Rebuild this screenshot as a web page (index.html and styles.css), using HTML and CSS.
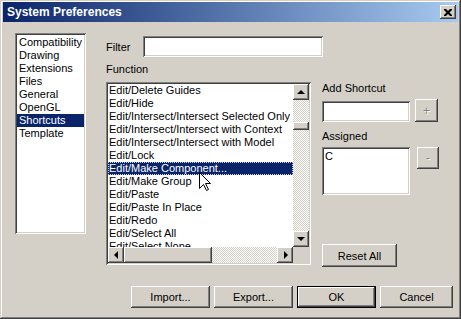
FILE: index.html
```html
<!DOCTYPE html>
<html lang="en">
<head>
    <meta charset="UTF-8">
    <title>System Preferences</title>
    <link rel="stylesheet" href="styles.css">
</head>
<body>
    <div class="window">
        <div class="titlebar">
            <span class="title">System Preferences</span>
            <div class="close-btn">
                <svg width="8" height="7" viewBox="0 0 8 7"><path d="M0 0h2l2 2 2-2h2v1l-2.5 2.5 2.5 2.5v1h-2l-2-2-2 2h-2v-1l2.5-2.5-2.5-2.5z" fill="#000"/></svg>
            </div>
        </div>
        <div class="client">
            <div class="main">
                <div class="nav sunken">
                    <div class="nav-item">Compatibility</div>
                    <div class="nav-item">Drawing</div>
                    <div class="nav-item">Extensions</div>
                    <div class="nav-item">Files</div>
                    <div class="nav-item">General</div>
                    <div class="nav-item">OpenGL</div>
                    <div class="nav-item selected">Shortcuts</div>
                    <div class="nav-item">Template</div>
                </div>
                <div class="content">
                    <div class="filter-row">
                        <span class="filter-label">Filter</span>
                        <div class="field filter-field sunken"></div>
                    </div>
                    <div class="lower">
                        <div class="function-col">
                            <div class="label">Function</div>
                            <div class="function-list sunken">
                                <div class="items">
                                    <div class="item">Edit/Delete Guides</div>
                                    <div class="item">Edit/Hide</div>
                                    <div class="item">Edit/Intersect/Intersect Selected Only</div>
                                    <div class="item">Edit/Intersect/Intersect with Context</div>
                                    <div class="item">Edit/Intersect/Intersect with Model</div>
                                    <div class="item">Edit/Lock</div>
                                    <div class="item selected">Edit/Make Component...</div>
                                    <div class="item">Edit/Make Group</div>
                                    <div class="item">Edit/Paste</div>
                                    <div class="item">Edit/Paste In Place</div>
                                    <div class="item">Edit/Redo</div>
                                    <div class="item">Edit/Select All</div>
                                    <div class="item">Edit/Select None</div>
                                </div>
                                <div class="vscroll">
                                    <div class="scroll-btn raised"><span class="arrow up"></span></div>
                                    <div class="track vtrack"><div class="thumb vthumb raised"></div></div>
                                    <div class="scroll-btn raised"><span class="arrow down"></span></div>
                                </div>
                                <div class="hscroll">
                                    <div class="scroll-btn raised"><span class="arrow left"></span></div>
                                    <div class="track htrack"><div class="thumb hthumb raised"></div></div>
                                    <div class="scroll-btn raised"><span class="arrow right"></span></div>
                                </div>
                                <div class="corner"></div>
                            </div>
                        </div>
                        <div class="side">
                            <div class="label">Add Shortcut</div>
                            <div class="add-row">
                                <div class="field shortcut-field sunken"></div>
                                <div class="btn small-btn plus-btn raised">+</div>
                            </div>
                            <div class="label assigned-label">Assigned</div>
                            <div class="assigned-row">
                                <div class="assigned-list sunken">C</div>
                                <div class="btn small-btn minus-btn raised">-</div>
                            </div>
                            <div class="btn reset-btn raised">Reset All</div>
                        </div>
                    </div>
                </div>
            </div>
            <div class="button-row">
                <div class="btn dlg-btn raised">Import...</div>
                <div class="btn dlg-btn raised">Export...</div>
                <div class="btn dlg-btn default-btn">OK</div>
                <div class="btn dlg-btn cancel-btn raised">Cancel</div>
            </div>
        </div>
        <svg class="cursor" width="12" height="19" viewBox="0 0 12 19"><path d="M0.5 0.5V16.5L4.5 12.5L7.5 18.5L9.5 17.5L6.5 11.5H11.5Z" fill="#fff" stroke="#000" stroke-width="1"/></svg>
    </div>
</body>
</html>
```

FILE: styles.css
```css
body { margin: 0; font-family: "Liberation Sans", Arial, sans-serif; font-size: 11px; color: #000; background: #d4d0c8; }
.window { position: relative; width: 461px; height: 319px; box-sizing: border-box; padding: 2px 3px 3px; background: #d4d0c8; display: flex; flex-direction: column; box-shadow: inset -1px -1px #404040, inset 1px 1px #d4d0c8, inset -2px -2px #808080, inset 2px 2px #fff; }
.titlebar { height: 20px; flex: none; display: flex; align-items: center; justify-content: space-between; padding: 0 2px 0 4px; background: linear-gradient(to right, #0a246a, #a6caf0); color: #fff; font-weight: bold; font-size: 12px; }
.close-btn { width: 16px; height: 14px; box-sizing: border-box; background: #d4d0c8; display: flex; align-items: center; justify-content: center; box-shadow: inset -1px -1px #404040, inset 1px 1px #fff, inset -2px -2px #808080, inset 2px 2px #d4d0c8; }

.raised { background: #d4d0c8; box-shadow: inset -1px -1px #404040, inset 1px 1px #fff, inset -2px -2px #808080, inset 2px 2px #d4d0c8; }
.sunken { background: #fff; box-shadow: inset 1px 1px #808080, inset -1px -1px #fff, inset 2px 2px #404040, inset -2px -2px #d4d0c8; }

.client { flex: 1; display: flex; flex-direction: column; padding: 11px 0 8px 12px; }
.main { display: flex; align-items: flex-start; }

.nav { width: 71px; height: 201px; box-sizing: border-box; padding: 3px 2px 2px; }
.nav-item { height: 13px; line-height: 13px; padding-left: 2px; white-space: nowrap; }
.nav-item.selected { background: #0a246a; color: #fff; }

.content { margin-left: 20px; margin-top: 3px; }
.filter-row { display: flex; align-items: center; height: 21px; }
.filter-label { width: 37px; }
.field { box-sizing: border-box; height: 21px; }
.filter-field { width: 180px; }
.label { line-height: 13px; height: 13px; white-space: nowrap; }

.lower { display: flex; align-items: flex-start; margin-top: 6px; }
.function-list { margin-top: 6px; width: 205px; height: 183px; box-sizing: border-box; padding: 2px; display: grid; grid-template-columns: 1fr 16px; grid-template-rows: 1fr 16px; }
.items { overflow: hidden; }
.item { height: 13px; line-height: 13px; padding-left: 1px; white-space: nowrap; }
.item.selected { background: #0a246a; color: #fff; outline: 1px dotted #d4d0c8; outline-offset: -1px; }

.vscroll { display: flex; flex-direction: column; }
.hscroll { display: flex; }
.corner { background: #d4d0c8; }
.scroll-btn { width: 16px; height: 16px; flex: none; box-sizing: border-box; display: flex; align-items: center; justify-content: center; }
.track { flex: 1; background: repeating-conic-gradient(#d4d0c8 0 25%, #fff 0 50%) 0 0 / 2px 2px; }
.vtrack { display: flex; flex-direction: column; padding-top: 22px; }
.htrack { display: flex; }
.vthumb { width: 16px; height: 8px; }
.hthumb { width: 88px; height: 16px; }
.arrow { width: 0; height: 0; border: 4px solid transparent; }
.arrow.up { border-bottom-color: #000; border-top-width: 0; margin-top: -1px; }
.arrow.down { border-top-color: #000; border-bottom-width: 0; }
.arrow.left { border-right-color: #000; border-left-width: 0; }
.arrow.right { border-left-color: #000; border-right-width: 0; margin-left: 1px; }

.side { margin-left: 11px; padding-top: 19px; }
.add-row { display: flex; align-items: flex-end; gap: 5px; margin-top: 4px; }
.shortcut-field { width: 88px; }
.assigned-label { margin-top: 8px; }
.assigned-row { display: flex; align-items: flex-start; gap: 7px; margin-top: 4px; }
.assigned-list { width: 88px; height: 48px; box-sizing: border-box; padding: 3px 3px; line-height: 13px; }

.btn { box-sizing: border-box; display: flex; align-items: center; justify-content: center; white-space: nowrap; }
.small-btn { color: #808080; text-shadow: 1px 1px #fff; font-size: 12px; }
.plus-btn { width: 23px; height: 23px; }
.minus-btn { width: 22px; height: 22px; }
.reset-btn { width: 75px; height: 23px; margin-top: 49px; }

.button-row { margin-top: auto; display: flex; justify-content: flex-end; gap: 4px; padding-right: 5px; }
.dlg-btn { width: 79px; height: 22px; }
.cancel-btn { width: 73px; }
.default-btn { background: #d4d0c8; box-shadow: inset 0 0 0 1px #000, inset -2px -2px #404040, inset 2px 2px #fff, inset -3px -3px #808080; }

.cursor { position: absolute; left: 199px; top: 172px; }
```
